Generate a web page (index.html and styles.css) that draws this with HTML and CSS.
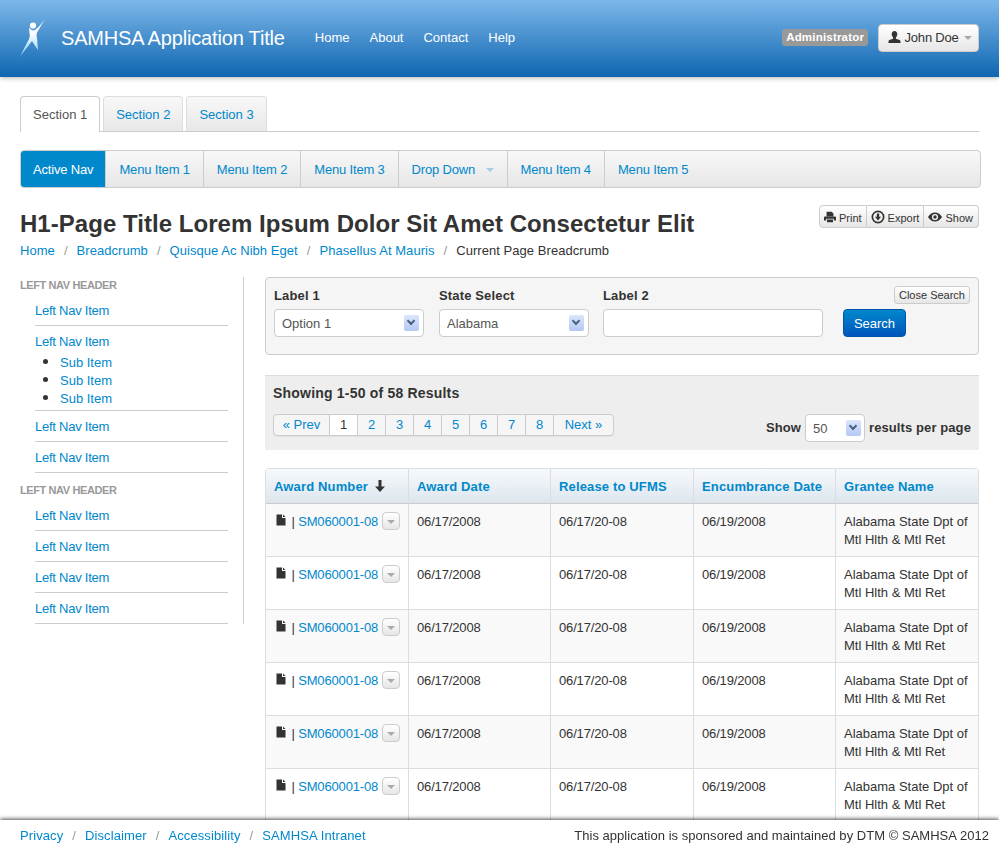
FILE: index.html
```html
<!DOCTYPE html>
<html>
<head>
    <title>SAMHSA Application Title</title>
    <link rel="stylesheet" href="styles.css">
</head>
<body>
    <svg class="icon-defs" width="0" height="0">
        <symbol id="i-user" viewBox="0 0 14 14"><path d="M7 0.500c2 0 3 1.400 3 3.400 0 1.600-.6 3-1.500 3.700v1.200l4 1.500c.8.3 1 1.200 1 3.200H0.500c0-2 .2-2.900 1-3.200l4-1.500V7.600C4.600 6.900 4 5.500 4 3.900 4 1.900 5 .5 7 .5z"/></symbol>
        <symbol id="i-print" viewBox="0 0 14 14"><path fill-rule="evenodd" d="M3 1h6l2 2v3H3zM1 6.500h12c.6 0 1 .4 1 1V11h-2.500V9h-9v2H0V7.500c0-.6.4-1 1-1zM3.500 9.800h7V13h-7z"/></symbol>
        <symbol id="i-down" viewBox="0 0 14 14"><path fill-rule="evenodd" d="M7 .5a6.500 6.500 0 1 1 0 13 6.500 6.500 0 0 1 0-13zM7 2.200a4.800 4.800 0 1 0 0 9.600 4.800 4.800 0 0 0 0-9.600zM5.800 3.500h2.400v3.300h1.900L7 10.500 3.900 6.800h1.900z"/></symbol>
        <symbol id="i-eye" viewBox="0 0 14 14"><path fill-rule="evenodd" d="M7 2.500c3 0 5.500 1.900 7 4.500-1.500 2.600-4 4.500-7 4.500S1.500 9.600 0 7c1.500-2.600 4-4.500 7-4.500zM7 3.900a3.100 3.100 0 1 0 0 6.200 3.100 3.100 0 0 0 0-6.200zM7 5.300a1.700 1.700 0 1 1 0 3.400 1.700 1.700 0 0 1 0-3.400z"/></symbol>
        <symbol id="i-file" viewBox="0 0 10 12"><path d="M0.500 0.500H6v3.500h3.500v7.500H.5zM7 .5l2.500 2.500H7z"/></symbol>
        <symbol id="i-arrow" viewBox="0 0 12 14"><path d="M4.500 1h3v6.500H11L6 13 1 7.500h3.500z"/></symbol>
    </svg>

    <div class="topbar">
        <a class="brand" href="#">
            <svg class="logo" width="26" height="39" viewBox="0 0 26 39">
                <defs>
                    <linearGradient id="logoFill" x1="0" y1="1" x2="0" y2="0">
                        <stop offset="0" stop-color="#7fcdf5"/>
                        <stop offset="0.6" stop-color="#ffffff"/>
                    </linearGradient>
                </defs>
                <circle cx="13" cy="7.500" r="3.100" fill="#fff"/>
                <path fill="url(#logoFill)" d="M25 0.500L18.500 12Q15.500 16 17 20L18 32 14.500 27 12 23 0 38.500 9 21Q10.500 18 9.500 15L9 9.500Q12 13.500 15 12 19.500 9 25 .5z"/>
            </svg>
            <span>SAMHSA Application Title</span>
        </a>
        <ul class="topnav">
            <li><a href="#">Home</a></li>
            <li><a href="#">About</a></li>
            <li><a href="#">Contact</a></li>
            <li><a href="#">Help</a></li>
        </ul>
        <span class="role-label">Administrator</span>
        <button type="button" class="user-btn"><svg class="icon"><use href="#i-user"/></svg> John Doe <span class="caret"></span></button>
    </div>

    <div class="page">
        <ul class="tabs">
            <li class="active"><a href="#">Section 1</a></li>
            <li><a href="#">Section 2</a></li>
            <li><a href="#">Section 3</a></li>
        </ul>

        <ul class="subnav">
            <li class="active"><a href="#">Active Nav</a></li>
            <li><a href="#">Menu Item 1</a></li>
            <li><a href="#">Menu Item 2</a></li>
            <li><a href="#">Menu Item 3</a></li>
            <li><a href="#">Drop Down <span class="caret caret-blue"></span></a></li>
            <li><a href="#">Menu Item 4</a></li>
            <li class="last"><a href="#">Menu Item 5</a></li>
        </ul>

        <div class="title-row">
            <h1>H1-Page Title Lorem Ipsum Dolor Sit Amet Consectetur Elit</h1>
            <div class="btn-group">
                <button type="button"><svg class="icon"><use href="#i-print"/></svg> Print</button>
                <button type="button"><svg class="icon"><use href="#i-down"/></svg> Export</button>
                <button type="button"><svg class="icon"><use href="#i-eye"/></svg> Show</button>
            </div>
        </div>

        <ul class="breadcrumb">
            <li><a href="#">Home</a></li>
            <li><a href="#">Breadcrumb</a></li>
            <li><a href="#">Quisque Ac Nibh Eget</a></li>
            <li><a href="#">Phasellus At Mauris</a></li>
            <li class="current">Current Page Breadcrumb</li>
        </ul>

        <div class="columns">
            <div class="sidebar">
                <div class="side-inner">
                    <h4>LEFT NAV HEADER</h4>
                    <ul class="leftnav">
                        <li><a href="#">Left Nav Item</a></li>
                        <li class="has-sub"><a href="#">Left Nav Item</a>
                            <ul>
                                <li><a href="#">Sub Item</a></li>
                                <li><a href="#">Sub Item</a></li>
                                <li><a href="#">Sub Item</a></li>
                            </ul>
                        </li>
                        <li><a href="#">Left Nav Item</a></li>
                        <li><a href="#">Left Nav Item</a></li>
                    </ul>
                    <h4>LEFT NAV HEADER</h4>
                    <ul class="leftnav">
                        <li><a href="#">Left Nav Item</a></li>
                        <li><a href="#">Left Nav Item</a></li>
                        <li><a href="#">Left Nav Item</a></li>
                        <li><a href="#">Left Nav Item</a></li>
                    </ul>
                </div>
            </div>

            <div class="main">
                <form class="search-well">
                    <div class="field">
                        <label for="label1">Label 1</label>
                        <div class="select-wrap w150">
                            <select id="label1"><option>Option 1</option></select>
                            <span class="select-arrow"></span>
                        </div>
                    </div>
                    <div class="field">
                        <label for="state">State Select</label>
                        <div class="select-wrap w150">
                            <select id="state"><option>Alabama</option></select>
                            <span class="select-arrow"></span>
                        </div>
                    </div>
                    <div class="field">
                        <label for="label2">Label 2</label>
                        <input type="text" id="label2" class="text-input">
                    </div>
                    <button type="button" class="search-btn">Search</button>
                    <button type="button" class="close-search">Close Search</button>
                </form>

                <div class="results-bar">
                    <div class="results-count">Showing 1-50 of 58 Results</div>
                    <div class="results-row">
                        <ul class="pager">
                            <li class="pager-prev"><a href="#">« Prev</a></li>
                            <li class="active"><a href="#">1</a></li>
                            <li><a href="#">2</a></li>
                            <li><a href="#">3</a></li>
                            <li><a href="#">4</a></li>
                            <li><a href="#">5</a></li>
                            <li><a href="#">6</a></li>
                            <li><a href="#">7</a></li>
                            <li><a href="#">8</a></li>
                            <li class="pager-next"><a href="#">Next »</a></li>
                        </ul>
                        <div class="per-page">
                            <span>Show</span>
                            <div class="select-wrap w60">
                                <select><option>50</option></select>
                                <span class="select-arrow"></span>
                            </div>
                            <span>results per page</span>
                        </div>
                    </div>
                </div>

                <table class="awards">
                    <thead>
                        <tr>
                            <th><a href="#">Award Number</a> <svg class="icon sort"><use href="#i-arrow"/></svg></th>
                            <th><a href="#">Award Date</a></th>
                            <th><a href="#">Release to UFMS</a></th>
                            <th><a href="#">Encumbrance Date</a></th>
                            <th><a href="#">Grantee Name</a></th>
                        </tr>
                    </thead>
                    <tbody id="awardRows"></tbody>
                </table>
            </div>
        </div>
    </div>

    <div class="footer">
        <ul class="footer-links">
            <li><a href="#">Privacy</a></li>
            <li><a href="#">Disclaimer</a></li>
            <li><a href="#">Accessibility</a></li>
            <li><a href="#">SAMHSA Intranet</a></li>
        </ul>
        <div class="footer-note">This application is sponsored and maintained by DTM © SAMHSA 2012</div>
    </div>

    <script>
        var rows = '';
        for (var i = 0; i < 6; i++) {
            rows += '<tr>' +
                '<td class="award-cell"><svg class="icon file"><use href="#i-file"/></svg> | <a href="#">SM060001-08</a> <button type="button" class="row-btn"><span class="caret"></span></button></td>' +
                '<td>06/17/2008</td>' +
                '<td>06/17/20-08</td>' +
                '<td>06/19/2008</td>' +
                '<td class="grantee">Alabama State Dpt of Mtl Hlth &amp; Mtl Ret</td>' +
                '</tr>';
        }
        document.getElementById('awardRows').innerHTML = rows;
    </script>
</body>
</html>
```

FILE: styles.css
```css
body {
    font-family: "Liberation Sans", Arial, sans-serif;
    font-size: 13px;
    line-height: 18px;
    color: #333;
    margin: 0;
    padding: 0;
    background-color: #fff;
}
a {
    color: #0088cc;
    text-decoration: none;
}
ul {
    list-style: none;
    margin: 0;
    padding: 0;
}
button, select, input {
    font-family: inherit;
}
.icon-defs {
    position: absolute;
}
.icon {
    width: 14px;
    height: 14px;
    fill: #333;
    vertical-align: -2px;
}

/* top bar */
.topbar {
    display: flex;
    align-items: center;
    height: 77px;
    padding: 0 20px 2px;
    box-sizing: border-box;
    background: linear-gradient(to bottom, #7cb7ea, #0f66b0);
    box-shadow: 0 1px 5px rgba(0, 0, 0, 0.3);
}
.brand {
    display: flex;
    align-items: center;
    color: #fff;
    font-size: 20px;
    letter-spacing: -0.17px;
}
.brand span {
    margin-left: 15px;
}
.logo {
    display: block;
}
.topnav {
    display: flex;
    margin-left: 20px;
}
.topnav a {
    display: block;
    padding: 0 10px;
    color: #fff;
}
.role-label {
    margin-left: auto;
    padding: 2px 4px;
    background-color: #999;
    border-radius: 3px;
    color: #fff;
    font-size: 11.5px;
    font-weight: bold;
    letter-spacing: 0.2px;
    line-height: 13px;
}
.user-btn {
    margin-left: 10px;
    height: 28px;
    padding: 0 6px 0 9px;
    background: linear-gradient(to bottom, #fff, #e6e6e6);
    border: 1px solid #ccc;
    border-radius: 4px;
    color: #333;
    font-size: 13px;
    letter-spacing: -0.2px;
}
.user-btn .icon {
    width: 13px;
}
.caret {
    display: inline-block;
    width: 0;
    height: 0;
    margin-left: 2px;
    vertical-align: 2px;
    border-top: 4px solid #aaa;
    border-left: 4px solid transparent;
    border-right: 4px solid transparent;
}
.caret-blue {
    margin-left: 7px;
    border-top-color: #a5cde6;
}

/* page */
.page {
    padding: 19px 20px 0;
}
.tabs {
    display: flex;
    height: 35px;
    border-bottom: 1px solid #ccc;
}
.tabs li {
    margin-right: 3px;
}
.tabs a {
    display: block;
    height: 35px;
    line-height: 35px;
    padding: 0 12px;
    background: linear-gradient(to bottom, #f8f8f8, #e8e8e8);
    border: 1px solid #ddd;
    border-bottom: 0;
    border-radius: 4px 4px 0 0;
    box-sizing: border-box;
}
.tabs .active a {
    height: 36px;
    background: #fff;
    border-color: #ccc;
    color: #555;
}
.subnav {
    display: flex;
    height: 36px;
    margin: 18px -2px 0 0;
    background: linear-gradient(to bottom, #f8f8f8, #e6e6e6);
    border: 1px solid #ccc;
    border-radius: 4px;
    overflow: hidden;
    letter-spacing: -0.17px;
}
.subnav a {
    display: block;
    height: 36px;
    padding: 0 13px;
    line-height: 37px;
    border-right: 1px solid #ccc;
}
.subnav .active a {
    background-color: #0088cc;
    color: #fff;
    padding: 0 12px;
}
.subnav .last a {
    border-right: 0;
}
.title-row {
    display: flex;
    justify-content: space-between;
    margin-top: 18px;
}
h1 {
    margin: 0;
    font-size: 24px;
    line-height: 36px;
    font-weight: bold;
    letter-spacing: 0.04px;
    color: #333;
}
.btn-group {
    display: flex;
    height: 23px;
    margin-top: -1px;
}
.btn-group button {
    height: 23px;
    padding: 0 4px;
    background: linear-gradient(to bottom, #fff, #e6e6e6);
    border: 1px solid #ccc;
    border-left: 0;
    color: #333;
    font-size: 11px;
}
.btn-group button:first-child {
    border-left: 1px solid #ccc;
    border-radius: 4px 0 0 4px;
}
.btn-group button:first-child .icon {
    width: 12px;
}
.btn-group button:last-child {
    padding-right: 5px;
    border-radius: 0 4px 4px 0;
}
.breadcrumb {
    display: flex;
    height: 18px;
    letter-spacing: 0.05px;
}
.breadcrumb li + li::before {
    content: "/";
    padding: 0 9px;
    color: #999;
}
.breadcrumb .current {
    color: #333;
}

/* columns */
.columns {
    display: flex;
    margin-top: 17px;
}
.sidebar {
    width: 245px;
    flex-shrink: 0;
}
.side-inner {
    width: 224px;
    border-right: 1px solid #ccc;
    padding-right: 15px;
    box-sizing: border-box;
}
.sidebar h4 {
    margin: 0 0 1px;
    font-size: 11px;
    line-height: 17px;
    font-weight: bold;
    letter-spacing: -0.4px;
    color: #999;
}
.leftnav {
    margin: 0 0 9px 15px;
}
.leftnav:last-child {
    margin-bottom: 0;
}
.leftnav > li {
    padding: 7px 0 5px;
    border-bottom: 1px solid #ccc;
}
.leftnav > li > a {
    letter-spacing: -0.25px;
}
.leftnav .has-sub {
    padding-bottom: 3px;
}
.leftnav ul {
    list-style: disc;
    margin: 2px 0 0 25px;
    padding: 0;
    color: #333;
}
.leftnav ul li {
    height: 18px;
}
.leftnav ul li::marker {
    font-size: 17px;
}
.main {
    width: 714px;
    flex-shrink: 0;
}
.search-well {
    position: relative;
    display: flex;
    height: 78px;
    padding: 8px 8px 0;
    background-color: #f5f5f5;
    border: 1px solid #ccc;
    border-radius: 4px;
    box-sizing: border-box;
}
.field {
    margin-right: 15px;
}
.field:nth-child(2) {
    margin-right: 14px;
}
.field:last-of-type {
    margin-right: 20px;
}
.field label {
    display: block;
    font-weight: bold;
    line-height: 20px;
    letter-spacing: 0.15px;
    margin-bottom: 3px;
    color: #333;
}
.select-wrap {
    position: relative;
    height: 28px;
}
.w150 {
    width: 150px;
}
.w60 {
    width: 60px;
}
.select-wrap select {
    appearance: none;
    width: 100%;
    height: 100%;
    padding: 0 8px 0 7px;
    background-color: #fff;
    border: 1px solid #ccc;
    border-radius: 4px;
    color: #555;
    font-size: 13px;
}
.select-arrow {
    position: absolute;
    top: 6px;
    right: 5px;
    width: 15px;
    height: 16px;
    background: linear-gradient(to bottom, #dce6fb, #b4c8f4);
    border-radius: 2px;
    pointer-events: none;
}
.select-arrow::after {
    content: "";
    position: absolute;
    left: 4px;
    top: 3px;
    width: 4px;
    height: 4px;
    border-right: 2px solid #4d6185;
    border-bottom: 2px solid #4d6185;
    transform: rotate(45deg);
}
.text-input {
    display: block;
    width: 220px;
    height: 28px;
    box-sizing: border-box;
    border: 1px solid #ccc;
    border-radius: 4px;
    background-color: #fff;
}
.search-btn {
    align-self: flex-start;
    margin-top: 23px;
    width: 63px;
    height: 28px;
    background: linear-gradient(to bottom, #0088cc, #0055bb);
    border: 1px solid #0055aa;
    border-radius: 4px;
    color: #fff;
    font-size: 13px;
}
.close-search {
    position: absolute;
    top: 8px;
    right: 8px;
    height: 18px;
    padding: 0 4px;
    background: linear-gradient(to bottom, #fff, #e6e6e6);
    border: 1px solid #ccc;
    border-radius: 3px;
    color: #333;
    font-size: 11px;
    line-height: 14px;
}
.results-bar {
    margin-top: 20px;
    height: 75px;
    padding: 8px;
    background-color: #eee;
    border-top: 1px solid #ddd;
    box-sizing: border-box;
}
.results-count {
    font-weight: bold;
    font-size: 14px;
    letter-spacing: 0.2px;
    line-height: 18px;
}
.results-row {
    display: flex;
    justify-content: space-between;
    align-items: flex-start;
    margin-top: 12px;
}
.pager {
    display: flex;
    background-color: #f5f5f5;
    border: 1px solid #ccc;
    border-radius: 4px;
    overflow: hidden;
    box-shadow: 0 1px 1px rgba(0, 0, 0, 0.05);
}
.pager li {
    width: 28px;
}
.pager .pager-prev {
    width: 56px;
}
.pager .pager-next {
    width: 59px;
}
.pager a {
    display: block;
    line-height: 20px;
    text-align: center;
    border-right: 1px solid #ccc;
}
.pager li:last-child a {
    border-right: 0;
}
.pager .active a {
    background-color: #fff;
    color: #333;
}
.per-page {
    display: flex;
    align-items: center;
    font-weight: bold;
    letter-spacing: 0.1px;
}
.per-page .select-wrap {
    margin: 0 4px;
}
.per-page select {
    font-weight: normal;
}
.per-page .select-arrow {
    right: 4px;
}

/* table */
.awards {
    width: 714px;
    margin-top: 18px;
    border-collapse: separate;
    border-spacing: 0;
    table-layout: fixed;
    border: 1px solid #ddd;
    border-bottom: 0;
    border-radius: 4px 4px 0 0;
}
.awards th {
    height: 35px;
    padding: 2px 8px 0;
    box-sizing: border-box;
    text-align: left;
    letter-spacing: 0.15px;
    background: linear-gradient(to bottom, #f6f9fb, #dde6ee);
    border-left: 1px solid #ddd;
    border-bottom: 1px solid #ccc;
}
.awards th:nth-child(1), .awards th:nth-child(2), .awards th:nth-child(4) {
    width: 142px;
}
.awards th:nth-child(3), .awards th:nth-child(5) {
    width: 143px;
}
.awards td {
    height: 53px;
    padding: 9px 8px 7px;
    box-sizing: border-box;
    vertical-align: top;
    letter-spacing: -0.15px;
    border-left: 1px solid #ddd;
    border-bottom: 1px solid #ddd;
}
.awards th:first-child, .awards td:first-child {
    border-left: 0;
}
.awards .award-cell {
    padding: 8px 4px 8px 8px;
    white-space: nowrap;
}
.awards .grantee {
    letter-spacing: 0;
}
.awards tbody tr:nth-child(odd) td {
    background-color: #f9f9f9;
}
.sort {
    width: 12px;
    height: 14px;
    margin-left: 2px;
}
.file {
    width: 10px;
    height: 12px;
    margin: 0 2px 0 2px;
    vertical-align: 0;
}
.row-btn {
    width: 18px;
    height: 18px;
    padding: 0;
    background: linear-gradient(to bottom, #fff, #e6e6e6);
    border: 1px solid #ccc;
    border-radius: 4px;
    vertical-align: -3px;
}
.row-btn .caret {
    display: block;
    margin: 2px auto 0;
    vertical-align: 0;
}

/* footer */
.footer {
    position: fixed;
    left: 0;
    right: 0;
    bottom: 0;
    display: flex;
    justify-content: space-between;
    align-items: center;
    height: 32px;
    padding: 0 10px 0 20px;
    box-sizing: border-box;
    background-color: #fff;
    letter-spacing: 0.03px;
    box-shadow: 0 -1px 4px rgba(0, 0, 0, 0.7);
}
.footer-links {
    display: flex;
    letter-spacing: 0.1px;
}
.footer-links li + li::before {
    content: "/";
    padding: 0 9px;
    color: #999;
}
```
